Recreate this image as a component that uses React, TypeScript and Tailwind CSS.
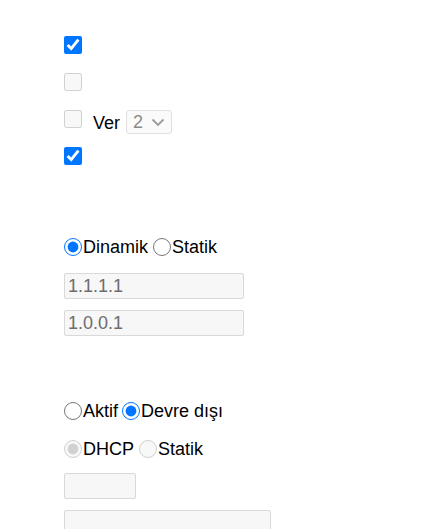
export default function App() {
  const inputCls =
    'm-0 box-border h-[26px] rounded-[2px] border border-[#d9d9d9] bg-[#f7f7f7] px-[3px] text-[18px] text-[#6d6d6d] outline-none';
  const box = 'm-0 h-[18px] w-[18px] shrink-0 accent-[#0075ff]';

  return (
    <div className="min-h-[529px] w-[438px] bg-white pl-[64px] pt-[36px] font-['Liberation_Sans',Arial,sans-serif] text-[18px] leading-none text-black">
      <div className="flex flex-col">
        <div className="flex h-[37px] items-start">
          <input type="checkbox" defaultChecked className={box} />
        </div>
        <div className="flex h-[37px] items-start">
          <input type="checkbox" disabled className={box} />
        </div>
        <div className="flex h-[37px] items-start">
          <input type="checkbox" disabled className={box} />
          <span className="ml-[11px] mt-[4px]">Ver</span>
          <div className="ml-[6px] flex h-[24px] w-[46px] items-center justify-between rounded-[3px] border border-[#e1e1e1] bg-[#fafafa] pl-[6px] pr-[6px] text-[#8a8a8a]">
            <span>2</span>
            <svg width="14" height="9" viewBox="0 0 14 9" fill="none">
              <path d="M1.5 1.5 L7 7 L12.5 1.5" stroke="#9a9a9a" strokeWidth="1.8" />
            </svg>
          </div>
        </div>
        <div className="flex h-[37px] items-start">
          <input type="checkbox" defaultChecked className={box} />
        </div>
      </div>

      <div className="mt-[54px] flex items-center">
        <input type="radio" name="dns" defaultChecked className={box} />
        <span className="ml-[1px]">Dinamik</span>
        <input type="radio" name="dns" className={`${box} ml-[5px]`} />
        <span className="ml-[1px]">Statik</span>
      </div>
      <div className="mt-[17px] flex flex-col gap-[11px]">
        <input type="text" disabled defaultValue="1.1.1.1" className={`${inputCls} w-[180px]`} />
        <input type="text" disabled defaultValue="1.0.0.1" className={`${inputCls} w-[180px]`} />
      </div>

      <div className="mt-[66px] flex items-center">
        <input type="radio" name="wan" className={box} />
        <span className="ml-[1px]">Aktif</span>
        <input type="radio" name="wan" defaultChecked className={`${box} ml-[4px]`} />
        <span className="ml-[1px]">Devre dışı</span>
      </div>
      <div className="mt-[20px] flex items-center">
        <input type="radio" name="mode" disabled defaultChecked className={box} />
        <span className="ml-[1px]">DHCP</span>
        <input type="radio" name="mode" disabled className={`${box} ml-[5px]`} />
        <span className="ml-[1px]">Statik</span>
      </div>
      <div className="mt-[15px] flex flex-col gap-[11px]">
        <input type="text" disabled className={`${inputCls} w-[72px]`} />
        <input type="text" disabled className={`${inputCls} w-[207px]`} />
      </div>
    </div>
  );
}
